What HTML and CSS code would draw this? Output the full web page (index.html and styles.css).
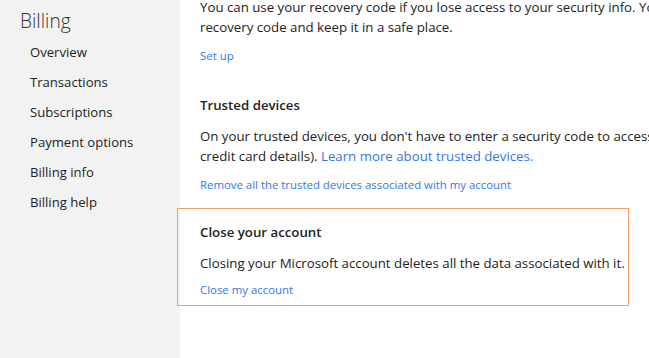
FILE: index.html
```html
<!DOCTYPE html>
<html>
<head>
<meta charset="utf-8">
<link rel="stylesheet" href="styles.css">
</head>
<body>
<div class="page">
  <nav class="sidebar">
    <div class="side-title">Billing</div>
    <ul class="side-list">
      <li>Overview</li>
      <li>Transactions</li>
      <li>Subscriptions</li>
      <li>Payment options</li>
      <li>Billing info</li>
      <li>Billing help</li>
    </ul>
  </nav>
  <main class="main">
    <section class="sec first">
      <p class="body">You can use your recovery code if you lose access to your security info. You should print your<br>recovery code and keep it in a safe place.</p>
      <a class="action">Set up</a>
    </section>
    <section class="sec">
      <h3 class="title">Trusted devices</h3>
      <p class="body">On your trusted devices, you don't have to enter a security code to access sensitive info (like your<br>credit card details). <a class="inline">Learn more about trusted devices.</a></p>
      <a class="action">Remove all the trusted devices associated with my account</a>
    </section>
    <section class="sec boxed">
      <h3 class="title">Close your account</h3>
      <p class="body">Closing your Microsoft account deletes all the data associated with it.</p>
      <a class="action">Close my account</a>
    </section>
  </main>
</div>
</body>
</html>
```
FILE: styles.css
```css
html, body {
  margin: 0;
  padding: 0;
  background: #ffffff;
  height: 100%;
  overflow: hidden;
}
body {
  font-family: "Open Sans", "Noto Sans", sans-serif;
  color: #222222;
}
.page {
  display: flex;
  height: 358px;
  width: 649px;
  overflow: hidden;
}
.sidebar {
  width: 180px;
  flex: none;
  background: #f2f2f2;
  padding: 7px 0 0 20px;
  box-sizing: border-box;
}
.side-title {
  font-size: 19.2px;
  font-weight: 300;
  line-height: 28px;
  color: #333333;
}
.side-list {
  list-style: none;
  margin: 2px 0 0 10px;
  padding: 0;
}
.side-list li {
  font-size: 13.1px;
  line-height: 30px;
  color: #222222;
}
.main {
  flex: none;
  width: 469px;
  padding: 0 0 0 20px;
  box-sizing: border-box;
  white-space: nowrap;
}
.sec {
  margin: 0;
}
.first {
  margin-top: -3px;
}
.body {
  margin: 0;
  font-size: 13.25px;
  line-height: 20px;
}
.title {
  margin: 0 0 11px;
  font-size: 13.25px;
  font-weight: 600;
  line-height: 20px;
}
.action {
  display: block;
  margin-top: 10px;
  font-size: 11.4px;
  line-height: 18px;
  color: #3078ee;
}
.inline {
  color: #3078ee;
}
.sec + .sec {
  margin-top: 30px;
}
.boxed {
  margin-left: -23px;
  width: 452px;
  box-sizing: border-box;
  border: 1.5px solid #f7a064;
  padding: 13px 0 6px 22px;
}
.sec.boxed {
  margin-top: 14px;
}
.boxed .action {
  margin-top: 8px;
}
```
